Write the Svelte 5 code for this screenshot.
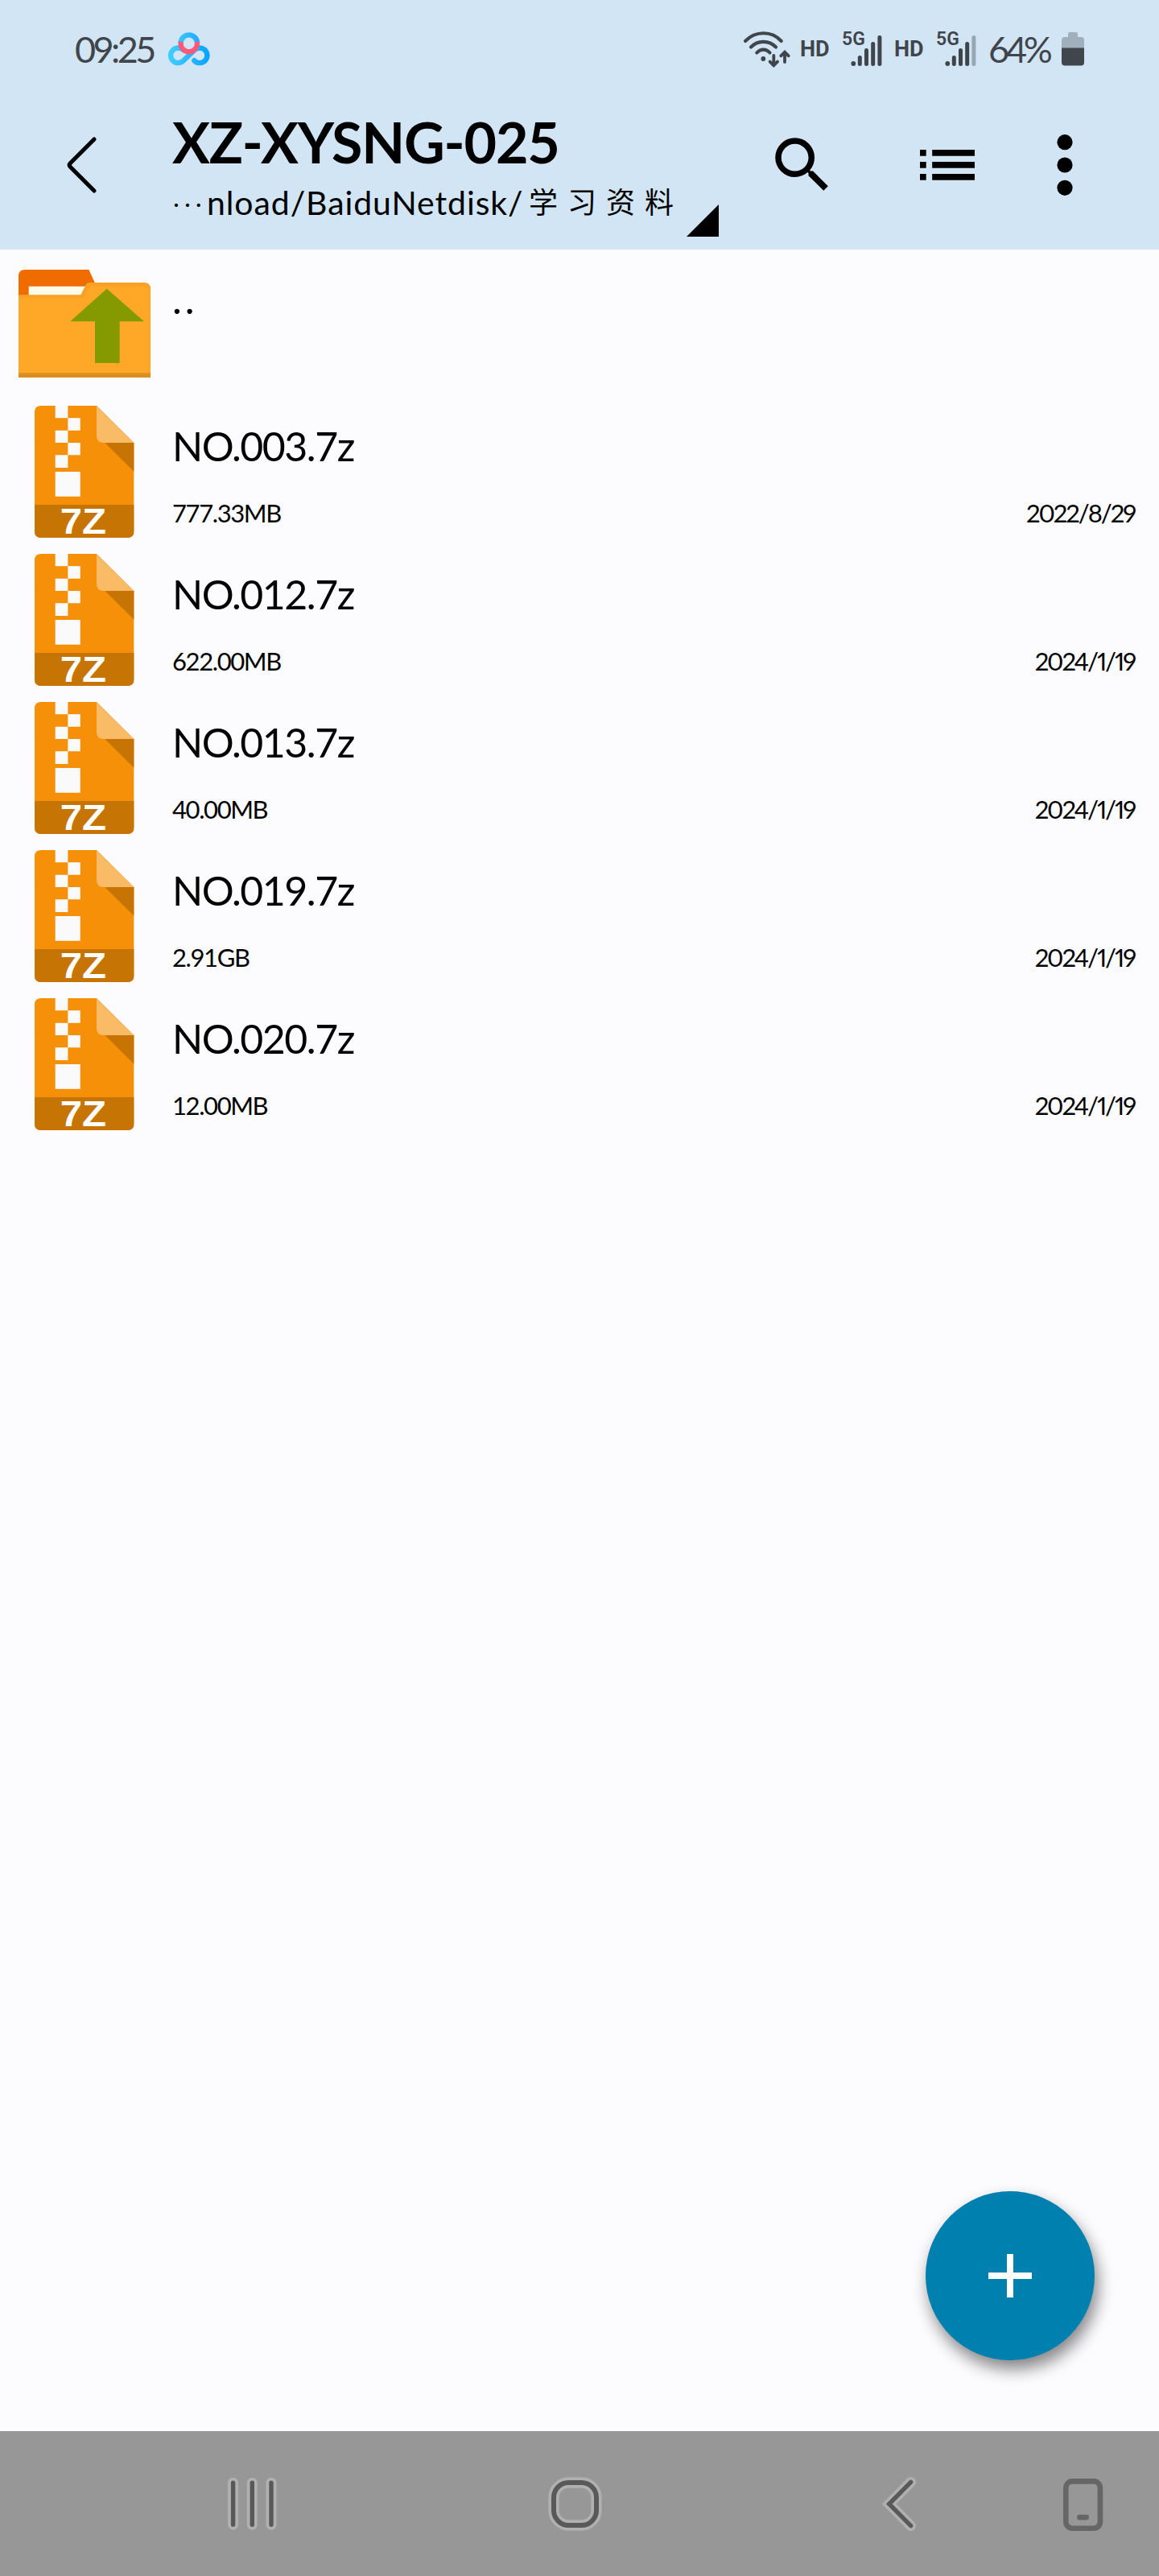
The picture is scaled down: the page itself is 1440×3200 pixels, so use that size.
<script>
  const title = 'XZ-XYSNG-025';

  const files = [
    { name: 'NO.003.7z', size: '777.33MB', date: '2022/8/29' },
    { name: 'NO.012.7z', size: '622.00MB', date: '2024/1/19' },
    { name: 'NO.013.7z', size: '40.00MB', date: '2024/1/19' },
    { name: 'NO.019.7z', size: '2.91GB', date: '2024/1/19' },
    { name: 'NO.020.7z', size: '12.00MB', date: '2024/1/19' }
  ];

  // signal strength of both SIM cards, out of 4 bars
  const sims = [4, 3];
  const barTops = [31, 22, 14, 6];
</script>

<div class="screen">
  <header>
    <div class="status">
      <span class="clock">09:25</span>
      <svg class="netdisk" viewBox="0 0 52 41">
        <defs>
          <linearGradient id="cloud" gradientUnits="userSpaceOnUse" x1="0" y1="0" x2="51" y2="0">
            <stop offset="0" stop-color="#3fd0ff" />
            <stop offset="0.5" stop-color="#2fb8ff" />
            <stop offset="1" stop-color="#06a2ff" />
          </linearGradient>
        </defs>
        <g fill="none" stroke="url(#cloud)" stroke-width="6.4" stroke-linecap="round">
          <path d="M19 21.3A9.3 9.3 0 1 0 19 34.3L32.5 21.3A9.3 9.3 0 1 1 32.3 34.2" />
          <path d="M15.6 12.6a10.2 10.2 0 0 1 20.4 0" stroke-linecap="butt" />
        </g>
        <path d="M15.6 10.8v2.3a10.2 10.2 0 0 0 20.4 0v-2.3" fill="none" stroke="#fb5b78" stroke-width="6.2" />
      </svg>

      <div class="indicators">
        <svg class="wifi" viewBox="0 0 60 46" fill="none" stroke="#3f454b" stroke-width="4.2" stroke-linecap="round">
          <path d="M3 13C15.5 0 36 0 47.7 13M10 20.5C18.5 11.6 32.5 11.6 41 20.5M17.3 27.5C21.8 22.2 29 22.2 33.5 27.5" />
          <circle cx="25.3" cy="35" r="2.9" fill="#3f454b" stroke="none" />
          <path d="M38.3 31v12M33.6 38.6l4.7 4.7 4.7-4.7M52 39V27M47.3 31.3l4.7-4.7 4.7 4.7" stroke-width="3.8" />
        </svg>
        {#each sims as level}
          <span class="hd">HD</span>
          <div class="sim">
            <span class="net">5G</span>
            <svg viewBox="0 0 50 46">
              <circle cx="13.3" cy="41" r="2.9" fill="#3f454b" />
              {#each barTops as top, i}
                <rect x={18.8 + i * 8.2} y={top} width="5" height={44 - top} rx="2.5" fill={i < level ? '#3f454b' : '#96a7b3'} />
              {/each}
            </svg>
          </div>
        {/each}
        <span class="percent">64%</span>
        <svg class="battery" viewBox="0 0 28 42">
          <path d="M8 6V2q0-2 2-2h8q2 0 2 2v4h4q4 0 4 4v12H0V10q0-4 4-4z" fill="#a0afbc" />
          <path d="M0 19.5h28v18q0 4-4 4H4q-4 0-4-4z" fill="#41454c" />
        </svg>
      </div>
    </div>

    <div class="toolbar">
      <svg class="back" viewBox="0 0 40 70" fill="none" stroke="#000" stroke-width="5.2" stroke-linecap="round">
        <path d="M36 3L6.5 32.5q-2.5 2.5 0 5L36 67" />
      </svg>
      <div class="heading">
        <h1>{title}</h1>
        <div class="path"><span class="dots">···</span><span class="dir">nload/BaiduNetdisk/</span><span class="cjk">学习资料</span></div>
      </div>
      <svg class="corner" viewBox="0 0 42 42"><path d="M41 1v40H1z" /></svg>
      <svg class="search" viewBox="0 0 24 24">
        <path d="M15.5 14h-.79l-.28-.27A6.47 6.47 0 0 0 16 9.5 6.5 6.5 0 1 0 9.5 16c1.61 0 3.09-.59 4.23-1.57l.27.28v.79l5 4.99L20.49 19l-4.99-5zm-6 0C7.01 14 5 11.99 5 9.5S7.01 5 9.5 5 14 7.01 14 9.5 11.99 14 9.5 14z" />
      </svg>
      <svg class="list-icon" viewBox="0 0 68 38">
        <path d="M0 0h7.7v7.7H0zM15.2 0H68v7.7H15.2zM0 15h7.7v7.7H0zM15.2 15H68v7.7H15.2zM0 30h7.7v7.7H0zM15.2 30H68v7.7H15.2z" />
      </svg>
      <svg class="more" viewBox="0 0 20 76">
        <circle cx="10" cy="9.7" r="9.6" />
        <circle cx="10" cy="38" r="9.6" />
        <circle cx="10" cy="66.3" r="9.6" />
      </svg>
    </div>
  </header>

  <main>
    <div class="row">
      <div class="thumb">
        <svg class="folder" viewBox="0 0 492 402">
          <path d="M0 110V24Q0 0 24 0h238l24 52v60z" fill="#f06c00" />
          <path d="M38 62h220v50H38z" fill="#fffdea" />
          <path d="M0 94h232l20-40q3-6 10-6h206q24 0 24 24v330H0z" fill="#f8a126" />
          <path d="M0 106h236q8 0 12-8l14-29q3-7 12-7h194q20 0 24 18v306H0z" fill="#ffa726" />
          <path d="M0 385h492v17H0z" fill="#db8f20" />
          <path d="M329 71l139 122h-91v155h-92V193h-92z" fill="#859900" />
        </svg>
      </div>
      <div class="info"><div class="name up">..</div></div>
    </div>
    {#each files as file}
      <div class="row">
        <div class="thumb">
          <svg class="archive" viewBox="0 0 370 492">
            <path d="M24 0h207l139 138v331q0 23-24 23H24Q0 492 0 468V24Q0 0 24 0z" fill="#f59008" />
            <path d="M262 138h108v107z" fill="#c67504" />
            <path d="M231 0l139 138H257q-26 0-26-26z" fill="#f9bb66" />
            <path d="M77 0h47v46H77zM124 46h46v46h-46zM77 92h47v46H77zM124 138h46v46h-46zM77 184h47v47H77zM77 246h93v92H77z" fill="#fafafa" />
            <path d="M0 369h370v99q0 24-24 24H24Q0 492 0 468z" fill="#c67504" />
            <text x="181" y="476" text-anchor="middle" textLength="172" lengthAdjust="spacingAndGlyphs">7Z</text>
          </svg>
        </div>
        <div class="info">
          <div class="name">{file.name}</div>
          <div class="meta">
            <span>{file.size}</span>
            <span class="date">{file.date}</span>
          </div>
        </div>
      </div>
    {/each}
    <button class="fab" aria-label="New">
      <svg viewBox="0 0 54 54"><path d="M23 0h8v23h23v8H31v23h-8V31H0v-8h23z" fill="#fff" /></svg>
    </button>
  </main>

  <nav>
    <svg viewBox="0 0 70 70" fill="none" stroke-linecap="round">
      <path d="M11.6 9.2v52M35.3 9.2v52M59 9.2v52" stroke="#b0b0b1" stroke-width="13" />
      <path d="M11.6 9.2v52M35.3 9.2v52M59 9.2v52" stroke="#595959" stroke-width="5.4" />
    </svg>
    <svg viewBox="0 0 70 70" fill="none">
      <rect x="8" y="9" width="53" height="53" rx="18.5" stroke="#b0b0b1" stroke-width="13.4" />
      <rect x="8" y="9" width="53" height="53" rx="18.5" stroke="#595959" stroke-width="6" />
    </svg>
    <svg viewBox="0 0 70 70" fill="none" stroke-linecap="round">
      <path d="M49.7 8.3L22.7 35.5l27 27.2" stroke="#b0b0b1" stroke-width="12.6" />
      <path d="M49.7 8.3L22.7 35.5l27 27.2" stroke="#595959" stroke-width="5.4" />
    </svg>
    <svg class="phone" viewBox="0 0 70 70" fill="none">
      <rect x="14.3" y="7.4" width="42.6" height="58.4" rx="8" stroke="#666" stroke-width="6.6" />
      <rect x="28" y="48.8" width="15" height="6.6" rx="3.3" fill="#666" />
    </svg>
  </nav>
</div>

<style>
  :global(body) {
    margin: 0;
  }

  .screen {
    display: flex;
    flex-direction: column;
    width: 1440px;
    height: 3200px;
    background: #fcfcff;
    color: #000;
    font-family: Lato, "Noto Sans CJK SC", sans-serif;
    overflow: hidden;
  }

  svg {
    display: block;
    flex: none;
    overflow: visible;
  }

  header {
    height: 310px;
    background: #d2e5f4;
  }

  .status {
    display: flex;
    align-items: center;
    box-sizing: border-box;
    height: 124px;
    padding: 0 93px 2px;
    color: #3f454b;
    white-space: nowrap;
  }
  .clock {
    width: 116px;
    font-size: 45px;
    letter-spacing: -3.6px;
  }
  .netdisk {
    width: 52px;
    height: 41px;
  }
  .indicators {
    display: flex;
    align-items: center;
    margin-left: auto;
  }
  .wifi {
    width: 60px;
    height: 46px;
    margin-right: 11px;
  }
  .hd {
    width: 53px;
    font: 700 27px Roboto, sans-serif;
  }
  .sim {
    position: relative;
    width: 64px;
  }
  .sim svg {
    width: 50px;
    height: 46px;
  }
  .net {
    position: absolute;
    left: -1px;
    top: 1px;
    font: 600 23px/20px Roboto, sans-serif;
  }
  .percent {
    width: 91px;
    font-size: 45px;
    letter-spacing: -4.2px;
  }
  .battery {
    width: 28px;
    height: 42px;
  }

  .toolbar {
    display: flex;
    align-items: center;
    height: 162px;
    padding-left: 81px;
  }
  .back {
    width: 40px;
    height: 70px;
    margin-right: 93px;
  }
  .heading {
    width: 638px;
    padding-top: 9px;
    white-space: nowrap;
  }
  h1 {
    margin: 0;
    font-size: 70px;
    font-weight: 700;
    line-height: 84px;
    letter-spacing: -1.2px;
  }
  .path {
    display: flex;
    font-size: 41px;
    line-height: 67px;
  }
  .dots {
    width: 43px;
    font-weight: 300;
    letter-spacing: 4px;
  }
  .dir {
    width: 400px;
    letter-spacing: 0.9px;
  }
  .cjk {
    font-size: 36px;
    letter-spacing: 12px;
  }
  .corner {
    align-self: flex-end;
    width: 42px;
    height: 42px;
    margin-bottom: -9px;
  }
  .search {
    width: 90px;
    height: 90px;
    margin-left: 58px;
  }
  .list-icon {
    width: 68px;
    height: 38px;
    margin-left: 101px;
  }
  .more {
    width: 20px;
    height: 76px;
    margin-left: 102px;
  }

  main {
    position: relative;
    flex: 1;
  }
  .row {
    display: flex;
    align-items: center;
    height: 184px;
  }
  .thumb {
    display: flex;
    justify-content: center;
    width: 210px;
  }
  .folder {
    width: 164px;
    height: 134px;
  }
  .archive {
    width: 123.4px;
    height: 164px;
  }
  .archive text {
    font: 700 133px "Liberation Sans", sans-serif;
    fill: #fff;
  }
  .info {
    flex: 1;
    padding: 0 30px 0 4px;
  }
  .name {
    font-size: 50px;
    line-height: 80px;
    letter-spacing: -1.5px;
  }
  .name.up {
    letter-spacing: 4px;
    padding-bottom: 62px;
  }
  .meta {
    display: flex;
    justify-content: space-between;
    font-size: 31px;
    line-height: 64px;
    padding-top: 11px;
    margin-bottom: -11px;
    letter-spacing: -1.4px;
  }
  .date {
    font-variant-numeric: proportional-nums;
    letter-spacing: -2.1px;
  }
  .fab {
    position: absolute;
    right: 80px;
    bottom: 88px;
    display: flex;
    align-items: center;
    justify-content: center;
    width: 210px;
    height: 210px;
    padding: 0;
    border: none;
    border-radius: 50%;
    background: #0080ae;
    box-shadow: 4px 11px 20px rgba(0, 0, 0, 0.48);
  }
  .fab svg {
    width: 54px;
    height: 54px;
  }

  nav {
    display: flex;
    align-items: center;
    gap: 332px;
    box-sizing: border-box;
    height: 180px;
    padding-left: 278px;
    background: #979798;
  }
  nav svg {
    width: 70px;
    height: 70px;
  }
  .phone {
    margin-left: -174px;
  }
</style>
